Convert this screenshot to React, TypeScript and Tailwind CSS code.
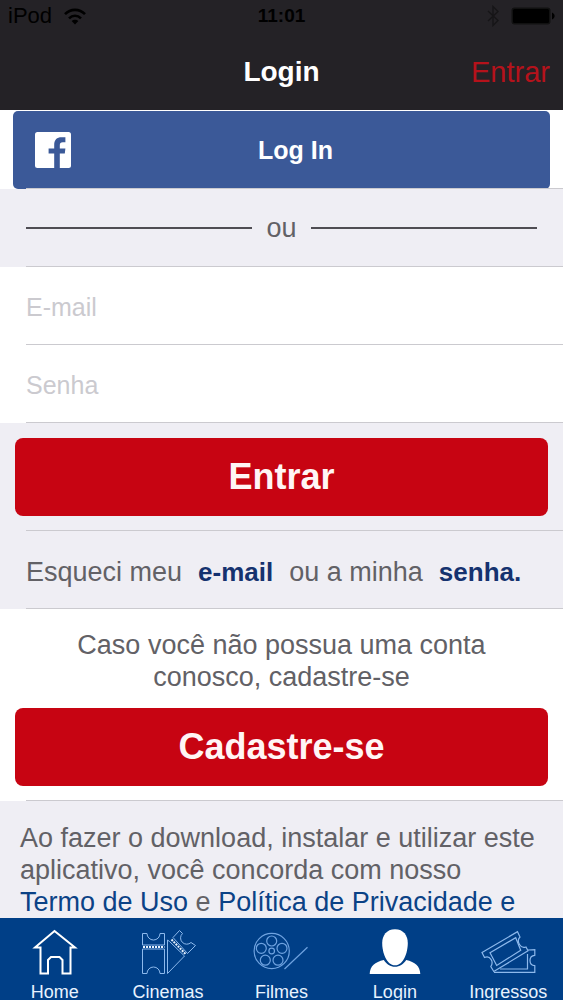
import type { ReactNode } from 'react';

// Ícones da barra inferior
function HomeIcon() {
  return (
    <svg viewBox="0 0 56 48" className="h-12 w-14" fill="none" stroke="#fff" strokeWidth="2" aria-hidden="true">
      <path d="M27.5 3 L48 19.5 H43.5 V45.5 H35.5 V32 L32.5 29 H24 L21 32 V45.5 H13.5 V19.5 H8 Z" />
    </svg>
  );
}

function CinemasIcon() {
  return (
    <svg viewBox="0 0 56 48" className="h-12 w-14" fill="none" stroke="#8db9ec" strokeWidth="1" aria-hidden="true">
      <path d="M2.5 17 V5.5 H7 A6.5 6.5 0 0 0 20 5.5 H24.5 V17 Z" />
      <path d="M2.5 21 V45.5 H7 A6.5 6.5 0 0 1 20 45.5 H24.5 V21 Z" />
      <path d="M3 19 H24.5" stroke="#e6f2ff" strokeWidth="2" strokeDasharray="2 1" />
      <path d="M33 9.5 L39.5 2.5 L42.5 5.5 A6 6 0 0 0 51 14.5 L55.5 17.5 L47.5 25.5 Z" />
      <path d="M27.5 45.5 V12 L29.5 13.5 L44.5 28 Z" />
      <path d="M31.5 11.5 L46 26.5" stroke="#e6f2ff" strokeWidth="2" strokeDasharray="2 1" />
    </svg>
  );
}

function FilmesIcon() {
  return (
    <svg viewBox="0 0 56 48" className="h-12 w-14" fill="none" stroke="#6fa3e0" strokeWidth="1.2" aria-hidden="true">
      <circle cx="18.7" cy="23" r="17.6" />
      <circle cx="18.7" cy="23" r="2.8" />
      <circle cx="18.7" cy="13" r="5" />
      <circle cx="29" cy="20.3" r="5" />
      <circle cx="25" cy="32.2" r="5" />
      <circle cx="12.3" cy="32.2" r="5" />
      <circle cx="8.3" cy="20.3" r="5" />
      <path d="M31.5 41 L54.5 19.3" />
    </svg>
  );
}

function LoginIcon() {
  return (
    <svg viewBox="0 0 56 48" className="h-12 w-14" fill="#fff" aria-hidden="true">
      <path d="M2.7 46 C3 38 8 34 16.8 32 C19.5 36 23.5 38.8 28 38.8 C32.5 38.8 36.5 36 39.2 32 C48 34 53 38 53.3 46 Z" />
      <path d="M28 1.2 C36.5 1.2 40.8 7.5 40.8 15 C40.8 24.5 36.5 37.3 28 37.3 C19.5 37.3 15.2 24.5 15.2 15 C15.2 7.5 19.5 1.2 28 1.2 Z" />
    </svg>
  );
}

function IngressosIcon() {
  return (
    <svg viewBox="0 0 56 48" className="h-12 w-14" fill="none" stroke="#8db9ec" strokeWidth="1.2" aria-hidden="true">
      <path d="M2 24.5 L37.5 3.7 L40 9 C38 11 38 14 39.5 16.5 C41 19 43.5 20 46 19 L48 22.8 L13.8 43.5 L10.8 38.5 C12.5 36 12.5 33.5 11 31.3 C9.5 29 7 28.4 4.5 29.5 Z" />
      <path d="M10 24.7 L35.7 9.7 L40.7 22.3 L16.7 37.5 Z" />
      <path d="M48 22 L54.8 21.7 V27.3 C51.5 27.5 50 30 50 32.5 C50 35 51.5 37.5 54.8 37.7 V44.3 H14" />
      <path d="M47.5 26 V41 H20" />
    </svg>
  );
}

function FacebookIcon() {
  return (
    <svg viewBox="0 0 36 36" className="size-9" aria-hidden="true">
      <rect width="36" height="36" rx="2.5" fill="#fff" />
      <path
        d="M19.2 36 V21.6 H13.6 V16.6 H19.2 V12.8 C19.2 7.6 22 5.2 26.5 5.2 H30.4 V10.3 H27.8 C25.6 10.3 24.8 11.2 24.8 13.4 V16.6 H30.4 L29.8 21.6 H24.8 V36 Z"
        fill="#3b5998"
      />
    </svg>
  );
}

function StatusBar() {
  return (
    <div className="grid h-[30px] grid-cols-3 items-center px-2 text-black">
      <div className="flex items-center gap-3">
        <span className="text-[22px]">iPod</span>
        <svg viewBox="0 0 22 17" className="h-[17px] w-[22px]" fill="none" stroke="#000" strokeWidth="2.6" aria-hidden="true">
          <path d="M1 6.2 C6.5 0.4 15.5 0.4 21 6.2" />
          <path d="M5 10.4 C8.5 6.9 13.5 6.9 17 10.4" />
          <path d="M11 16.5 L7.6 13 C9.5 11.2 12.5 11.2 14.4 13 Z" fill="#000" stroke="none" />
        </svg>
      </div>
      <span className="text-center text-[19px] font-bold">11:01</span>
      <div className="flex items-center justify-end gap-3">
        <svg viewBox="0 0 12 22" className="h-[22px] w-3" fill="none" stroke="#161517" strokeWidth="1.4" aria-hidden="true">
          <path d="M1 6 L11 15.5 L6 20.5 V1.5 L11 6.5 L1 16" />
        </svg>
        <svg viewBox="0 0 44 18" className="h-[18px] w-11" aria-hidden="true">
          <rect x="0.5" y="0.5" width="39" height="17" rx="3" fill="#111" />
          <rect x="2" y="2" width="36" height="14" rx="1.5" fill="#000" />
          <path d="M41 5.5 C44.5 7 44.5 11 41 12.5 Z" fill="#000" />
        </svg>
      </div>
    </div>
  );
}

// Linha da lista com o separador recuado à esquerda
function Row({ className, children }: { className: string; children: ReactNode }) {
  return (
    <div className={className}>
      {children}
      <div className="ml-[26px] h-px bg-[#cbcacf]" />
    </div>
  );
}

const tabs = [
  { name: 'Home', icon: <HomeIcon /> },
  { name: 'Cinemas', icon: <CinemasIcon /> },
  { name: 'Filmes', icon: <FilmesIcon /> },
  { name: 'Login', icon: <LoginIcon /> },
  { name: 'Ingressos', icon: <IngressosIcon /> },
];

export default function App() {
  return (
    <div className="flex h-screen flex-col overflow-hidden bg-[#efeef4] font-['Liberation_Sans',Arial,sans-serif] text-[27px] leading-8 text-[#626166]">
      <header className="shrink-0 bg-[#242226]">
        <StatusBar />
        <div className="grid h-20 grid-cols-3 items-center px-[13px] pt-1">
          <h1 className="col-start-2 text-center text-[28px] font-bold text-white">Login</h1>
          <button type="button" className="justify-self-end text-[29px] text-[#b5121b]">
            Entrar
          </button>
        </div>
      </header>

      <main className="min-h-0 flex-1 overflow-hidden">
        <form onSubmit={(e) => e.preventDefault()}>
          <Row className="bg-white">
            <div className="px-[13px] pt-px">
              <button
                type="button"
                className="-mb-px grid h-[78px] w-full grid-cols-[36px_1fr] items-center rounded-[5px] bg-[#3b5998] pr-[30px] pl-[22px] text-[25px] font-bold text-white"
              >
                <FacebookIcon />
                <span>Log In</span>
              </button>
            </div>
          </Row>

          <Row className="bg-[#efeef4]">
            <div className="flex h-[77px] items-center gap-[14px] px-[26px]">
              <div className="h-0.5 flex-1 bg-[#4f4d53]" />
              <span>ou</span>
              <div className="h-0.5 flex-1 bg-[#4f4d53]" />
            </div>
          </Row>

          <Row className="bg-white">
            <input
              type="email"
              aria-label="E-mail"
              placeholder="E-mail"
              className="block h-[77px] w-full px-[26px] pt-1 text-[25px] outline-none placeholder:text-[#cbcacf]"
            />
          </Row>
          <Row className="bg-white">
            <input
              type="password"
              aria-label="Senha"
              placeholder="Senha"
              className="block h-[77px] w-full px-[26px] pt-1 text-[25px] outline-none placeholder:text-[#cbcacf]"
            />
          </Row>

          <Row className="bg-[#efeef4]">
            <div className="px-[15px] pt-[15px] pb-[14px]">
              <button type="submit" className="h-[78px] w-full rounded-lg bg-[#c70412] text-4xl font-bold text-[#fff5f5]">
                Entrar
              </button>
            </div>
          </Row>
        </form>

        <Row className="bg-[#efeef4]">
          <p className="flex h-[77px] items-center gap-4 px-[26px] pt-1 whitespace-nowrap">
            <span>Esqueci meu</span>
            <a href="#email" className="text-[26px] font-bold text-[#15326f]">
              e-mail
            </a>
            <span>ou a minha</span>
            <a href="#senha" className="text-[26px] font-bold text-[#15326f]">
              senha.
            </a>
          </p>
        </Row>

        <Row className="bg-white">
          <div className="px-[15px] pt-5 pb-[14px]">
            <p className="px-10 text-center">Caso você não possua uma conta conosco, cadastre-se</p>
            <button type="button" className="mt-[15px] h-[78px] w-full rounded-lg bg-[#c70412] text-4xl font-bold text-[#fff5f5]">
              Cadastre-se
            </button>
          </div>
        </Row>

        <p className="pt-[21px] pr-3 pl-5">
          Ao fazer o download, instalar e utilizar este aplicativo, você concorda com nosso{' '}
          <a href="#termo" className="whitespace-nowrap text-[#0b4286]">
            Termo de Uso
          </a>{' '}
          e{' '}
          <a href="#privacidade" className="text-[#0b4286]">
            Política de Privacidade e
          </a>
        </p>
      </main>

      <nav className="shrink-0 bg-[#003f87] pt-[10px]" aria-label="Principal">
        <ul className="-mx-0.5 grid grid-cols-5">
          {tabs.map((tab) => (
            <li key={tab.name}>
              <a href={`#${tab.name.toLowerCase()}`} className="flex flex-col items-center gap-2 text-lg/4 text-[#e8f3ff]">
                {tab.icon}
                <span>{tab.name}</span>
              </a>
            </li>
          ))}
        </ul>
      </nav>
    </div>
  );
}
